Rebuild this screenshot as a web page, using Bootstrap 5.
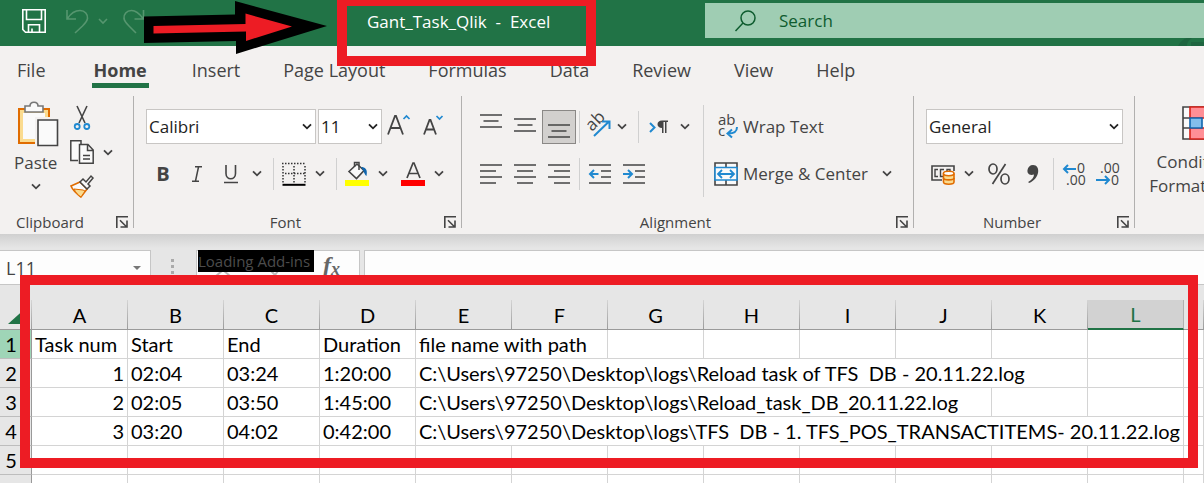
<!DOCTYPE html>
<html lang="en">
<head>
<meta charset="utf-8">
<meta name="viewport" content="width=device-width, initial-scale=1">
<title>Gant_Task_Qlik - Excel</title>
<link href="https://cdn.jsdelivr.net/npm/bootstrap@5.3.0/dist/css/bootstrap.min.css" rel="stylesheet">
<style>
  :root { --xl-green:#217346; --xl-ink:#444; --xl-panel:#f3f1f0; --xl-red:#ed1c24; --xl-blue:#2089d0; --xl-line:#d0d0d0; }
  body { font-family:"Open Sans","Noto Sans",sans-serif; font-size:17px; line-height:24px; color:var(--xl-ink); background:#fff; overflow:hidden; }
  svg { display:block; flex:none; overflow:visible; }
  button { font:inherit; color:inherit; background:none; border:0; padding:0; }

  .titlebar { height:46px; background:var(--xl-green); color:#fff; padding-left:22px; }
  .quick { width:123px; }
  .doc-title { width:360px; font-size:17px; line-height:44px; white-space:pre; }
  .doc-frame { top:-4px; left:-30px; width:259px; height:70px; border:10px solid var(--xl-red); z-index:3; }
  .doc-holder { margin-left:222px; width:338px; }
  .search-box { height:35px; margin-top:3px; background:#9fcdb3; color:#0e5c2f; padding-left:30px; gap:23px; }
  .search-box input { border:0; background:none; padding:0; width:100%; outline:0; color:inherit; font-size:17px; }
  .search-box input::placeholder { color:#0e5c2f; opacity:1; }
  .big-arrow { left:144px; top:0; z-index:3; }
  .deco { right:0; top:38px; }

  .tabs { height:48px; background:var(--xl-panel); padding-left:17px; gap:43px; font-size:18px; }
  .tabs button { height:42px; line-height:48px; white-space:nowrap; border-bottom:5px solid transparent; }
  .tabs .current { font-weight:700; border-color:var(--xl-green); margin-left:3px; padding:0 2px; }

  .ribbon { height:140px; background:var(--xl-panel); overflow:hidden; }
  .rgroup { position:relative; flex:none; padding-top:15px; }
  .rgroup::after { content:""; position:absolute; right:0; top:2px; bottom:6px; width:1px; background:#b1b0af; }
  .rbody { height:102px; }
  .rlabel { height:22px; font-size:15px; line-height:20px; padding-right:6px; }
  .rlabel button { width:19px; display:flex; justify-content:flex-end; }
  .g-clip { width:134px; } .g-font { width:328px; } .g-align { width:452px; } .g-num { width:221px; }
  .rrow { display:flex; align-items:center; height:35px; }
  .rrow + .rrow { margin-top:12px; }
  .ib { width:34px; height:34px; display:flex; align-items:center; justify-content:center; flex:none; }
  .ib.narrow { width:30px; }
  .ib.pressed { background:#d2d0ce; border:1px solid #8a8886; }
  .cb { width:18px; height:34px; display:flex; align-items:center; justify-content:center; flex:none; }
  .vsep { width:1px; height:32px; background:var(--xl-line); margin:0 3px; flex:none; }
  .vsep.wide { margin-left:7px; }
  .vsep.tall { height:92px; margin:-4px 10px 0 9px; }
  .glyph { font-size:20px; line-height:24px; }
  .inset { margin-left:14px; }
  .raise { margin-top:-8px; }
  .rselect { height:35px; padding:0 20px 0 2px; border:1px solid #c8c6c4; border-radius:0; color:#222; font-size:17px; line-height:24px;
    background:#fff url("data:image/svg+xml,%3Csvg xmlns='http://www.w3.org/2000/svg' width='10' height='7' viewBox='0 0 10 7'%3E%3Cpath d='M1 1.3l4 4 4-4' fill='none' stroke='%23222' stroke-width='1.8'/%3E%3C/svg%3E") no-repeat right 3px center; background-size:10px 7px; }
  .w-name { width:170px; } .w-size { width:64px; margin-left:2px; } .w-format { width:197px; }
  .txtbtn { display:flex; align-items:center; gap:5px; height:34px; white-space:nowrap; }
  .txtbtn + .cb { margin-left:10px; }
  .cond { width:106px; font-size:17px; flex:none; }

  .formula { height:66px; background:linear-gradient(#d0d0d0,#e6e6e6 14px); padding-top:16px; }
  .fbox { height:35px; background:#fdfdfd; border:1px solid #c6c6c6; }
  .name-box { width:151px; border-left:0; padding:0 9px 0 6px; }
  .name-box input { border:0; background:none; width:80px; padding:0; color:#444; outline:0; font-size:18px; }
  .fx { width:164px; margin-left:17px; }
  .fx em { font:italic bold 24px/28px "Liberation Serif",serif; color:#666; left:126px; top:0; }
  .fx em sub { font-size:18px; bottom:-2px; }
  .addins { left:1px; top:-1px; width:116px; height:22px; background:#000; color:#4c4c4c; font-size:15px; line-height:22px; white-space:nowrap; }
  .fentry { margin-left:4px; border-right:0; }

  .sheet { width:100%; table-layout:fixed; border-collapse:separate; border-spacing:0; font-family:Lato,"Open Sans",sans-serif; font-size:20px; line-height:28px; color:#000; }
  .sheet th { font-weight:400; text-align:center; padding:0; }
  .sheet .rh { width:32px; }
  .sheet .ch { width:96px; }
  .sheet thead th { height:30px; background:#e6e6e6; border-bottom:1px solid #999;
    border-right:1px solid; border-image:linear-gradient(#d6d6d6,#999) 1; border-top:0; border-left:0; }
  .sheet thead th.sel { background:#d2d2d2; color:var(--xl-green); border-image:none; border-right-color:#b0b0b0; border-bottom:2px solid var(--xl-green); }
  .sheet tbody th { background:#e6e6e6; border-right:1px solid #999; border-bottom:1px solid #bdbdbd; padding-right:9px; }
  .sheet tbody th.sel { background:#9fd5b7; }
  .sheet td { height:29px; padding:0 3px; border-right:1px solid #d4d4d4; border-bottom:1px solid #d4d4d4; white-space:pre; }
  .sheet .n { text-align:right; }
  .sheet-frame { left:20px; right:6px; top:-25px; height:193px; border:10px solid var(--xl-red); z-index:3; pointer-events:none; }
</style>
</head>
<body>
<svg width="0" height="0" class="position-absolute" aria-hidden="true">
  <defs>
    <symbol id="chev" viewBox="0 0 10 7"><path d="M1 1.3l4 4 4-4" fill="none" stroke="#444" stroke-width="1.8"/></symbol>
    <symbol id="launch" viewBox="0 0 12 12"><path d="M.8 12V.8H12M4 4.2l6 6M11 4.500V11H4.500" fill="none" stroke="#444" stroke-width="1.6"/></symbol>
  </defs>
</svg>

<header class="titlebar d-flex position-relative">
  <div class="quick d-flex align-items-center flex-shrink-0 pb-1">
    <button aria-label="Save"><svg width="24" height="24" viewBox="0 0 24 24" fill="none" stroke="#fff" stroke-width="1.6"><path d="M.8.8h22.400v22.400H3.500L.8 20.500zM4.500.8v9.700h15V.8M6.500 23v-7.200h11V23M10 23v-3.500"/></svg></button>
    <button class="ms-3 ps-1" aria-label="Undo"><svg width="24" height="26" viewBox="0 0 24 26" fill="none" stroke="#56966f" stroke-width="1.6"><path d="M1 2v9h9M1.500 10.500C5 5 9 2.500 14 2.500c5 0 8 4 7.500 8-.5 3-2.500 5-5 7.500L9 25"/></svg></button>
    <button class="ms-2" aria-label="Undo list"><svg width="10" height="7" viewBox="0 0 10 7"><path d="M1 1l4 4 4-4" fill="none" stroke="#56966f" stroke-width="1.600"/></svg></button>
    <button class="inset" aria-label="Redo"><svg width="24" height="26" viewBox="0 0 24 26" fill="none" stroke="#56966f" stroke-width="1.6"><path d="M21.500 2v9h-9M21 10.500C17 5 14 2.500 9.500 2.500c-5 0-8 4-7.500 8 .5 3 2.500 5 5 7.500l7 7"/></svg></button>
  </div>
  <svg class="big-arrow position-absolute" width="183" height="54" viewBox="0 0 183 54" aria-hidden="true"><path d="M0 16.500L91 14.500V1l92 25L92 54V41L0 43z"/><path fill="#ed1c24" d="M9.500 26l92-2V13.500L148 26.500 102 41v-9.500l-92.500 2z"/></svg>
  <div class="doc-holder position-relative flex-shrink-0">
    <div class="doc-title">Gant_Task_Qlik  -  Excel</div>
    <div class="doc-frame position-absolute"></div>
  </div>
  <label class="search-box d-flex align-items-center flex-grow-1">
    <svg width="21" height="22" viewBox="0 0 21 22" fill="none" stroke="#0e5c2f" stroke-width="1.500"><circle cx="13" cy="8" r="7"/><path d="M8 13L.5 21"/></svg>
    <input type="search" placeholder="Search" aria-label="Search">
  </label>
  <svg class="deco position-absolute" width="26" height="8" viewBox="0 0 26 8" aria-hidden="true"><path fill="#1e6540" d="M0 8C2 4 5 1 9 0h5C10 3 9 5 9 8zM13 4h13v4H13z"/></svg>
</header>

<nav class="tabs d-flex" aria-label="Ribbon tabs">
  <button>File</button><button class="current">Home</button><button>Insert</button><button>Page Layout</button><button>Formulas</button><button>Data</button><button>Review</button><button>View</button><button>Help</button>
</nav>

<section class="ribbon d-flex">
  <div class="rgroup g-clip">
    <div class="rbody d-flex">
      <button class="d-flex flex-column align-items-center justify-content-start inset raise">
        <svg width="42" height="46" viewBox="0 0 42 46"><path d="M4 8h30v34H4z" fill="#fadb8f" stroke="#e06c00" stroke-width="2"/><path d="M8 12h22v26H8z" fill="#fafafa"/><path d="M10 11V5h5c0-5 8-5 8 0h5v6z" fill="#fafafa" stroke="#777" stroke-width="1.600"/><path d="M20 16h22v29H20z" fill="#f3f1f0"/><path d="M23 19h19.500v25.500H23z" fill="#fafafa" stroke="#444" stroke-width="1.600"/></svg>
        <span class="mt-1">Paste</span>
        <svg class="mt-2" width="10" height="7"><use href="#chev"/></svg>
      </button>
      <div class="d-flex flex-column ms-2 raise">
        <button class="ib" aria-label="Cut"><svg width="16" height="24" viewBox="0 0 16 24" fill="none"><path d="M3 0l8 17M13 0L5 17" stroke="#444" stroke-width="1.600"/><circle cx="3.200" cy="20.500" r="2.500" stroke="#2089d0" stroke-width="1.800"/><circle cx="12.800" cy="20.500" r="2.500" stroke="#2089d0" stroke-width="1.800"/></svg></button>
        <div class="d-flex"><button class="ib" aria-label="Copy"><svg width="24" height="24" viewBox="0 0 24 24" fill="#fafafa" stroke="#444" stroke-width="1.500"><path d="M8 20.500H.8V.8H11V4"/><path d="M9.500 4.500h8.500l5.200 5.500v13.200H9.500zM17.500 4.500v6h5.700M13 15.500h7M13 19h7"/></svg></button>
        <button class="cb" aria-label="Copy options"><svg width="10" height="7"><use href="#chev"/></svg></button></div>
        <button class="ib" aria-label="Format Painter"><svg width="24" height="23" viewBox="0 0 24 23"><path d="M1 11l9-4 7 7-6 8C7 19 3 16 1 11z" fill="#fafafa" stroke="#e06c00" stroke-width="1.600"/><path d="M4 14l9 1 2 1-4 6c-3-2-5-4-7-8z" fill="#fadb8f" stroke="#e06c00"/><path d="M10 7l3-3 3 3 5-6 2 2-5 6 2 2-3 3z" fill="#fafafa" stroke="#444" stroke-width="1.500"/></svg></button>
      </div>
    </div>
    <div class="rlabel d-flex align-items-center"><span class="flex-grow-1 ps-3">Clipboard</span><button aria-label="Clipboard settings"><svg width="12" height="12"><use href="#launch"/></svg></button></div>
  </div>

  <div class="rgroup g-font">
    <div class="rbody ps-2 ms-1">
      <div class="rrow">
        <select class="form-select rselect w-name" aria-label="Font"><option>Calibri</option></select>
        <select class="form-select rselect w-size" aria-label="Font size"><option>11</option></select>
        <button class="ib" aria-label="Increase font size"><svg width="24" height="26" viewBox="0 0 24 26" fill="none"><path d="M1 20.500L8 2h1l7 18.500M3.500 14h10" stroke="#444" stroke-width="1.800"/><path d="M16.500 5l3-3 3 3" stroke="#2089d0" stroke-width="1.700"/></svg></button>
        <button class="ib" aria-label="Decrease font size"><svg width="20" height="26" viewBox="0 0 20 26" fill="none"><path d="M1 20.500L6.500 6h1L13 20.500M3 15.500h8" stroke="#444" stroke-width="1.800"/><path d="M13.500 2l3 3 3-3" stroke="#2089d0" stroke-width="1.700"/></svg></button>
      </div>
      <div class="rrow">
        <button class="ib glyph fw-bold" aria-label="Bold">B</button>
        <button class="ib glyph" aria-label="Italic"><svg width="10" height="16" viewBox="0 0 10 16"><path d="M3 .8h7M0 15.200h7M6.500 1L3.500 15" fill="none" stroke="#444" stroke-width="1.500"/></svg></button>
        <button class="ib glyph" aria-label="Underline"><svg width="14" height="20" viewBox="0 0 14 20"><path d="M2 1v8.500c0 7 9.500 7 9.500 0V1M0 18.500h14" fill="none" stroke="#444" stroke-width="1.600"/></svg></button>
        <button class="cb" aria-label="Underline options"><svg width="10" height="7"><use href="#chev"/></svg></button>
        <span class="vsep wide"></span>
        <button class="ib" aria-label="Borders"><svg width="24" height="24" viewBox="0 0 24 24" fill="none" stroke="#333" stroke-width="1.500"><path d="M0 1.500h24M1 4v17M23 4v17M12 4v17M3 11.500h20" stroke-dasharray="1.500 1.500"/><path d="M.5 22.800h23" stroke="#000" stroke-width="2"/></svg></button>
        <button class="cb" aria-label="Border options"><svg width="10" height="7"><use href="#chev"/></svg></button>
        <span class="vsep wide"></span>
        <button class="ib" aria-label="Fill color"><svg width="24" height="25" viewBox="0 0 24 25"><path d="M4 10.500L12 3l7 6.500-7.500 8z" fill="#fafafa" stroke="#444" stroke-width="1.600"/><path d="M9.500 6V1.500h4.500V9" fill="none" stroke="#444" stroke-width="1.500"/><path d="M16 6c4 0 7 2 5.500 9-2-1-2.500-5-5.500-9z" fill="#1066ae"/><path d="M0 19h24v6H0z" fill="#ff0"/></svg></button>
        <button class="cb" aria-label="Fill options"><svg width="10" height="7"><use href="#chev"/></svg></button>
        <button class="ib ms-1" aria-label="Font color"><svg width="24" height="25" viewBox="0 0 24 25"><path d="M6 17L12 2h1l6 15M8 12.500h9" fill="none" stroke="#444" stroke-width="1.700"/><path d="M0 19h24v6H0z" fill="red"/></svg></button>
        <button class="cb" aria-label="Font color options"><svg width="10" height="7"><use href="#chev"/></svg></button>
      </div>
    </div>
    <div class="rlabel d-flex align-items-center"><span class="flex-grow-1 text-center">Font</span><button aria-label="Font settings"><svg width="12" height="12"><use href="#launch"/></svg></button></div>
  </div>

  <div class="rgroup g-align">
    <div class="rbody d-flex align-items-start ps-2 ms-1">
      <div>
        <div class="rrow">
          <button class="ib" aria-label="Top align"><svg width="22" height="28" viewBox="0 0 22 28" stroke="#444" stroke-width="1.600"><path d="M0 2h22M3.500 8h15M0 14h22"/></svg></button>
          <button class="ib" aria-label="Middle align"><svg width="22" height="28" viewBox="0 0 22 28" stroke="#444" stroke-width="1.600"><path d="M0 6h22M3.500 12h15M0 18h22"/></svg></button>
          <button class="ib pressed" aria-label="Bottom align"><svg width="22" height="28" viewBox="0 0 22 28" stroke="#444" stroke-width="1.600"><path d="M0 12h22M3.500 18h15M0 24h22"/></svg></button>
          <span class="vsep"></span>
          <button class="ib narrow" aria-label="Orientation"><svg width="26" height="26" viewBox="0 0 26 26"><text transform="translate(7 18) rotate(-45)" font-size="17" fill="#444">ab</text><path d="M9 22L23.500 8M17 7.500h7.500V15" fill="none" stroke="#2089d0" stroke-width="2"/></svg></button>
          <button class="cb" aria-label="Orientation options"><svg width="10" height="7"><use href="#chev"/></svg></button>
          <span class="vsep wide"></span>
          <button class="ib" aria-label="Text direction"><svg width="20" height="14" viewBox="0 0 20 14"><path d="M1 3l4.500 4.500L1 12" fill="none" stroke="#2089d0" stroke-width="2"/><path d="M13 8c-6 0-6-7.500 0-7.500h6V2h-1.500v11H16V2h-1.500v11H13z" fill="#444"/></svg></button>
          <button class="cb" aria-label="Text direction options"><svg width="10" height="7"><use href="#chev"/></svg></button>
        </div>
        <div class="rrow">
          <button class="ib" aria-label="Align left"><svg width="22" height="20" viewBox="0 0 22 20" stroke="#444" stroke-width="1.600"><path d="M0 1h22M0 7h16M0 13h22M0 19h16"/></svg></button>
          <button class="ib" aria-label="Center"><svg width="22" height="20" viewBox="0 0 22 20" stroke="#444" stroke-width="1.600"><path d="M0 1h22M3 7h16M0 13h22M3 19h16"/></svg></button>
          <button class="ib" aria-label="Align right"><svg width="22" height="20" viewBox="0 0 22 20" stroke="#444" stroke-width="1.600"><path d="M0 1h22M6 7h16M0 13h22M6 19h16"/></svg></button>
          <span class="vsep"></span>
          <button class="ib" aria-label="Decrease indent"><svg width="22" height="20" viewBox="0 0 22 20" fill="none" stroke="#444" stroke-width="1.600"><path d="M0 1h22M12 7h10M12 13h10M0 19h22"/><path d="M9.500 10H1M5 6l-4 4 4 4" stroke="#2089d0" stroke-width="2"/></svg></button>
          <button class="ib" aria-label="Increase indent"><svg width="22" height="20" viewBox="0 0 22 20" fill="none" stroke="#444" stroke-width="1.600"><path d="M0 1h22M12 7h10M12 13h10M0 19h22"/><path d="M0 10h9M5 6l4 4-4 4" stroke="#2089d0" stroke-width="2"/></svg></button>
        </div>
      </div>
      <span class="vsep tall"></span>
      <div>
        <div class="rrow"><button class="txtbtn"><svg width="24" height="26" viewBox="0 0 24 26"><text font-size="15" fill="#444"><tspan x="4" y="11">ab</tspan><tspan x="4" y="22">c</tspan></text><path d="M23 13c0 5-3 6.500-9 6.500M18 15.500l-4.500 4 4.500 4" fill="none" stroke="#2089d0" stroke-width="2"/></svg>Wrap Text</button></div>
        <div class="rrow"><button class="txtbtn"><svg width="24" height="24" viewBox="0 0 24 24" fill="#fafafa" stroke="#444" stroke-width="1.600"><path d="M1 1h22v22H1zM12 1v5M12 18v5"/><path d="M1 5.500h22v12.500H1z" stroke="#2089d0"/><path d="M4 12h16M8 8l-4 4 4 4M16 8l4 4-4 4" fill="none" stroke="#2089d0" stroke-width="1.800"/></svg>Merge &amp; Center</button><button class="cb" aria-label="Merge options"><svg width="10" height="7"><use href="#chev"/></svg></button></div>
      </div>
    </div>
    <div class="rlabel d-flex align-items-center"><span class="flex-grow-1 text-center">Alignment</span><button aria-label="Alignment settings"><svg width="12" height="12"><use href="#launch"/></svg></button></div>
  </div>

  <div class="rgroup g-num">
    <div class="rbody ps-2 ms-1">
      <div class="rrow"><select class="form-select rselect w-format" aria-label="Number format"><option>General</option></select></div>
      <div class="rrow">
        <button class="ib" aria-label="Accounting format"><svg width="24" height="22" viewBox="0 0 24 22" fill="none" stroke="#444" stroke-width="1.600"><path d="M11 17H1V3h22v5"/><path d="M7 6.500H4v7h3M13 13.500H9.500v-7H13M16 8V6.500h3V8" stroke-width="1.400"/><path d="M12.500 10.500v8.500c0 3 10.500 3 10.500 0v-8.500" fill="#fadb8f" stroke="#e06c00"/><ellipse cx="17.700" cy="10.500" rx="5.300" ry="2.200" fill="#fff" stroke="#e06c00"/><path d="M12.500 15c0 2.500 10.500 2.500 10.500 0" stroke="#e06c00"/></svg></button>
        <button class="cb" aria-label="Accounting options"><svg width="10" height="7"><use href="#chev"/></svg></button>
        <button class="ib ms-1" aria-label="Percent style"><svg width="22" height="22" viewBox="0 0 22 22" fill="none" stroke="#444" stroke-width="1.700"><ellipse cx="5" cy="6" rx="4" ry="5"/><ellipse cx="17" cy="16" rx="4" ry="5"/><path d="M17.500 1L4.500 21"/></svg></button>
        <button class="ib" aria-label="Comma style"><svg width="12" height="20" viewBox="0 0 12 20"><path d="M6 1c8 0 7 14-4 18l-.8-1C5 16 7 13 7 10.500 2 12 0 9 .5 6 1 3 3 1 6 1z" fill="#444"/></svg></button>
        <span class="vsep"></span>
        <button class="ib" aria-label="Increase decimal"><svg width="24" height="24" viewBox="0 0 24 24"><path d="M14 7H1.500M6 3L2 7l4 4" fill="none" stroke="#2089d0" stroke-width="2"/><text font-size="14" fill="#444"><tspan x="15" y="11">0</tspan><tspan x="4" y="23">.00</tspan></text></svg></button>
        <button class="ib" aria-label="Decrease decimal"><svg width="24" height="24" viewBox="0 0 24 24"><path d="M0 18h13M9 14l4 4-4 4" fill="none" stroke="#2089d0" stroke-width="2"/><text font-size="14" fill="#444"><tspan x="4" y="11">.00</tspan><tspan x="15" y="23">0</tspan></text></svg></button>
      </div>
    </div>
    <div class="rlabel d-flex align-items-center"><span class="flex-grow-1 text-center">Number</span><button aria-label="Number settings"><svg width="12" height="12"><use href="#launch"/></svg></button></div>
  </div>

  <button class="cond d-flex flex-column align-items-center justify-content-start inset pt-2">
    <svg class="mt-1 mb-2" width="40" height="36" viewBox="0 0 40 36" fill="#fafafa" stroke="#444" stroke-width="1.600"><path d="M1 1h38v32H1zM1 12h8M1 22h8"/><path d="M8 1h24v11H8zM8 22h24v11H8z" fill="#ff8f96" stroke="#d8221a"/><path d="M8 12h12v10H8z" fill="#83beec" stroke="#1066ae"/></svg>
    <span>Conditional</span><span>Formatting ⌄</span>
  </button>
</section>

<section class="formula d-flex align-items-start">
  <div class="fbox name-box d-flex align-items-center justify-content-between flex-shrink-0">
    <input type="text" value="L11" aria-label="Name box">
    <svg width="8" height="4" viewBox="0 0 8 4"><path d="M0 0h8L4 4z" fill="#777"/></svg>
  </div>
  <svg class="ms-3 mt-2" width="12" height="20" viewBox="0 0 12 20" fill="#aaa"><path d="M4 1h3v3H4zM4 7h3v3H4zM4 13h3v3H4z"/></svg>
  <div class="fbox fx position-relative flex-shrink-0">
    <svg class="position-absolute start-0 top-0" width="90" height="26" viewBox="0 0 90 26" fill="none" stroke="#bbb" stroke-width="2"><path d="M19 25l7-6 7 6M74 20l4 4 3-4"/></svg>
    <em class="position-absolute">f<sub>x</sub></em>
    <div class="addins position-absolute">Loading Add-ins</div>
  </div>
  <input class="fbox fentry flex-grow-1" type="text" aria-label="Formula bar">
</section>

<main class="position-relative">
  <table class="sheet">
    <colgroup><col class="rh"><col class="ch" span="12"><col></colgroup>
    <thead><tr>
      <th class="rh"><svg class="ms-2" width="22" height="22" viewBox="0 0 22 22"><path d="M20 2v18H0z" fill="#217346"/></svg></th>
      <th class="ch">A</th><th class="ch">B</th><th class="ch">C</th><th class="ch">D</th><th class="ch">E</th><th class="ch">F</th><th class="ch">G</th><th class="ch">H</th><th class="ch">I</th><th class="ch">J</th><th class="ch">K</th><th class="ch sel">L</th><th></th>
    </tr></thead>
    <tbody>
      <tr><th class="sel">1</th><td>Task num</td><td>Start</td><td>End</td><td>Duration</td><td colspan="2">file name with path</td><td></td><td></td><td></td><td></td><td></td><td></td><td></td></tr>
      <tr><th>2</th><td class="n">1</td><td>02:04</td><td>03:24</td><td>1:20:00</td><td colspan="7">C:\Users\97250\Desktop\logs\Reload task of TFS  DB - 20.11.22.log</td><td></td><td></td></tr>
      <tr><th>3</th><td class="n">2</td><td>02:05</td><td>03:50</td><td>1:45:00</td><td colspan="6">C:\Users\97250\Desktop\logs\Reload_task_DB_20.11.22.log</td><td></td><td></td><td></td></tr>
      <tr><th>4</th><td class="n">3</td><td>03:20</td><td>04:02</td><td>0:42:00</td><td colspan="8">C:\Users\97250\Desktop\logs\TFS  DB - 1. TFS_POS_TRANSACTITEMS- 20.11.22.log</td><td></td></tr>
      <tr><th>5</th><td></td><td></td><td></td><td></td><td></td><td></td><td></td><td></td><td></td><td></td><td></td><td></td><td></td></tr>
      <tr><th>6</th><td></td><td></td><td></td><td></td><td></td><td></td><td></td><td></td><td></td><td></td><td></td><td></td><td></td></tr>
    </tbody>
  </table>
  <div class="sheet-frame position-absolute"></div>
</main>
<script src="https://cdn.jsdelivr.net/npm/bootstrap@5.3.0/dist/js/bootstrap.bundle.min.js"></script>
</body>
</html>
